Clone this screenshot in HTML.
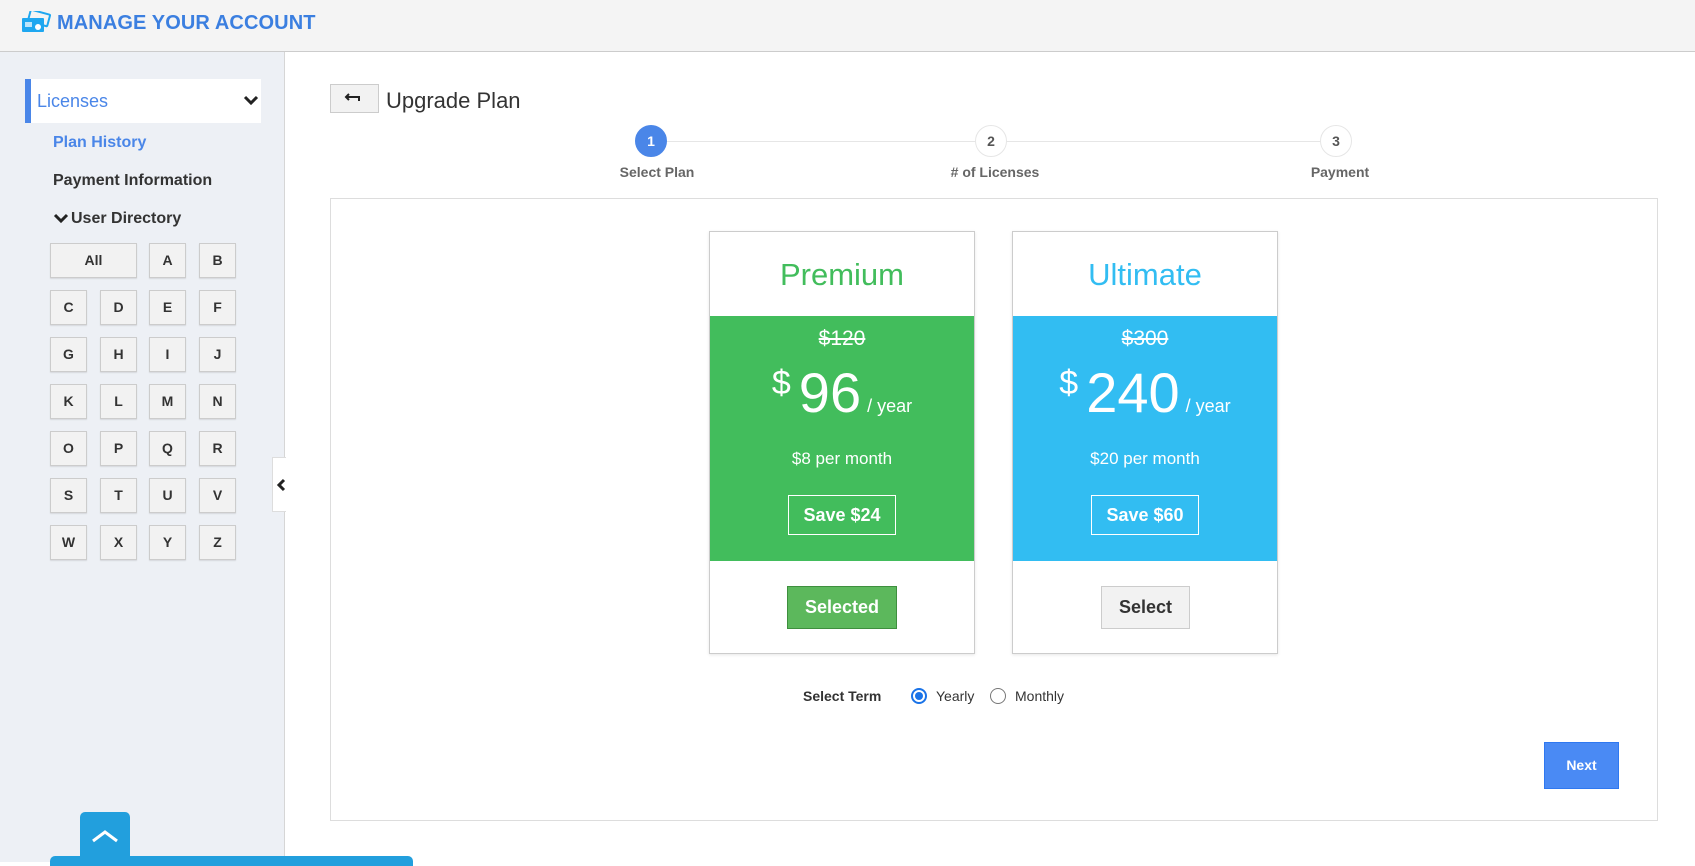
<!DOCTYPE html>
<html><head><meta charset="utf-8"><style>
*{box-sizing:border-box;margin:0;padding:0}
body{width:1695px;height:862px;overflow:hidden;background:#fff;font-family:"Liberation Sans",Arial,sans-serif;position:relative}
.a{position:absolute}
.hdr{left:0;top:0;width:1695px;height:52px;background:#f4f4f4;border-bottom:1px solid #ccc}
.ttl{left:57px;top:12px;font-size:20px;font-weight:bold;color:#3b7fe0;letter-spacing:0.1px}
.side{left:0;top:52px;width:285px;height:810px;background:#edf0f5;border-right:1px solid #d6d6d6}
.lic{left:25px;top:79px;width:236px;height:44px;background:#fff;border-left:6px solid #4a86e8}
.lic span{position:absolute;left:6px;top:12px;font-size:18px;color:#4a86e8}
.nav{font-size:16px;font-weight:bold;color:#333}
.btn{position:absolute;height:35px;width:37px;background:#f2f2f2;border:1px solid #ccc;box-shadow:0 1px 1px rgba(0,0,0,.1);font-size:14px;font-weight:bold;color:#333;text-align:center;line-height:33px}
.circ{position:absolute;width:32px;height:32px;border-radius:50%;border:1px solid #e6e6e6;background:#fff;text-align:center;line-height:30px;font-size:14px;font-weight:bold;color:#555}
.lbl{position:absolute;font-size:14px;font-weight:bold;color:#666;width:200px;text-align:center}
.card{position:absolute;top:231px;width:266px;height:423px;border:1px solid #ccc;box-shadow:0 1px 3px rgba(0,0,0,.1);background:#fff}
.card .t{position:absolute;left:0;top:25px;width:100%;text-align:center;font-size:31px}
.card .c{position:absolute;left:0;top:84px;width:100%;height:245px;color:#fff;text-align:center}
.old{position:absolute;top:11px;width:100%;font-size:21px;text-decoration:line-through}
.big{position:absolute;top:44px;width:100%;font-size:56px;white-space:nowrap}
.big sup{font-size:34px;vertical-align:top;position:relative;top:4px;margin-right:8px}
.big small{font-size:18px;margin-left:6px}
.pm{position:absolute;top:133px;width:100%;font-size:17px}
.save{position:absolute;top:179px;width:108px;height:40px;border:1px solid #fff;font-size:18px;font-weight:bold;line-height:38px}
</style></head><body>
<div class="a hdr"></div>
<svg class="a" style="left:21px;top:11px" width="30" height="22" viewBox="0 0 30 22"><rect x="8" y="1" width="20" height="12" rx="1" transform="rotate(15 18 7)" fill="none" stroke="#1ea7f0" stroke-width="2"/><rect x="1" y="7" width="22" height="14" rx="1" fill="#1ea7f0"/><rect x="4" y="11" width="7" height="5" fill="#fff" opacity=".7"/><circle cx="17" cy="16" r="3" fill="#fff"/></svg>
<div class="a ttl">MANAGE YOUR ACCOUNT</div>
<div class="a side"></div>
<div class="a lic"><span>Licenses</span>
<svg style="position:absolute;left:212px;top:16px" width="16" height="12" viewBox="0 0 16 12"><path d="M2 2l6 6 6-6" fill="none" stroke="#222" stroke-width="3"/></svg></div>
<div class="a nav" style="left:53px;top:134px;color:#4a86e8">Plan History</div>
<div class="a nav" style="left:53px;top:172px">Payment Information</div>
<svg class="a" style="left:53px;top:213px" width="16" height="12" viewBox="0 0 16 12"><path d="M2 2l6 6 6-6" fill="none" stroke="#222" stroke-width="3"/></svg>
<div class="a nav" style="left:71px;top:210px">User Directory</div>
<div class="btn" style="left:50px;top:243px;width:87px">All</div>
<div class="btn" style="left:149px;top:243px">A</div>
<div class="btn" style="left:199px;top:243px">B</div>
<div class="btn" style="left:50px;top:290px">C</div><div class="btn" style="left:100px;top:290px">D</div><div class="btn" style="left:149px;top:290px">E</div><div class="btn" style="left:199px;top:290px">F</div>
<div class="btn" style="left:50px;top:337px">G</div><div class="btn" style="left:100px;top:337px">H</div><div class="btn" style="left:149px;top:337px">I</div><div class="btn" style="left:199px;top:337px">J</div>
<div class="btn" style="left:50px;top:384px">K</div><div class="btn" style="left:100px;top:384px">L</div><div class="btn" style="left:149px;top:384px">M</div><div class="btn" style="left:199px;top:384px">N</div>
<div class="btn" style="left:50px;top:431px">O</div><div class="btn" style="left:100px;top:431px">P</div><div class="btn" style="left:149px;top:431px">Q</div><div class="btn" style="left:199px;top:431px">R</div>
<div class="btn" style="left:50px;top:478px">S</div><div class="btn" style="left:100px;top:478px">T</div><div class="btn" style="left:149px;top:478px">U</div><div class="btn" style="left:199px;top:478px">V</div>
<div class="btn" style="left:50px;top:525px">W</div><div class="btn" style="left:100px;top:525px">X</div><div class="btn" style="left:149px;top:525px">Y</div><div class="btn" style="left:199px;top:525px">Z</div>
<div class="a" style="left:272px;top:457px;width:14px;height:55px;background:#fff;border:1px solid #ddd;border-right:none"></div>
<svg class="a" style="left:276px;top:478px" width="10" height="14" viewBox="0 0 10 14"><path d="M8 2L3 7l5 5" fill="none" stroke="#222" stroke-width="3"/></svg>
<div class="a" style="left:80px;top:812px;width:50px;height:50px;background:#229fdd;border-radius:5px 5px 0 0"></div>
<svg class="a" style="left:90px;top:828px" width="30" height="16" viewBox="0 0 30 16"><path d="M3 13L15 4l12 9" fill="none" stroke="#fff" stroke-width="3"/></svg>
<div class="a" style="left:50px;top:856px;width:363px;height:10px;background:#229fdd;border-radius:5px 5px 0 0"></div>

<div class="a" style="left:330px;top:84px;width:49px;height:29px;background:#f2f2f2;border:1px solid #ccc"></div>
<svg class="a" style="left:344px;top:91px" width="20" height="14" viewBox="0 0 20 14"><path d="M5 3L2 6l3 3M2 6h13v4" fill="none" stroke="#222" stroke-width="2"/></svg>
<div class="a" style="left:386px;top:88px;font-size:22px;color:#333">Upgrade Plan</div>
<div class="a" style="left:651px;top:141px;width:685px;height:1px;background:#e6e6e6"></div>
<div class="circ" style="left:635px;top:125px;background:#4a86e8;border-color:#4a86e8;color:#fff">1</div>
<div class="circ" style="left:975px;top:125px">2</div>
<div class="circ" style="left:1320px;top:125px">3</div>
<div class="lbl" style="left:557px;top:164px">Select Plan</div>
<div class="lbl" style="left:895px;top:164px"># of Licenses</div>
<div class="lbl" style="left:1240px;top:164px">Payment</div>

<div class="a" style="left:330px;top:198px;width:1328px;height:623px;border:1px solid #ddd"></div>
<div class="card" style="left:709px"><div class="t" style="color:#42bd5c">Premium</div>
<div class="c" style="background:#42bd5c"><div class="old">$120</div><div class="big"><sup>$</sup>96<small>/ year</small></div><div class="pm">$8 per month</div><div class="save" style="left:78px">Save $24</div></div>
<div class="a" style="left:77px;top:354px;width:110px;height:43px;background:#5cb85c;border:1px solid #3e8f3e;color:#fff;font-size:18px;font-weight:bold;text-align:center;line-height:41px">Selected</div></div>
<div class="card" style="left:1012px"><div class="t" style="color:#32bdf2">Ultimate</div>
<div class="c" style="background:#32bdf2"><div class="old">$300</div><div class="big"><sup>$</sup>240<small>/ year</small></div><div class="pm">$20 per month</div><div class="save" style="left:78px">Save $60</div></div>
<div class="a" style="left:88px;top:354px;width:89px;height:43px;background:#f2f2f2;border:1px solid #ccc;color:#333;font-size:18px;font-weight:bold;text-align:center;line-height:41px">Select</div></div>

<div class="a" style="left:803px;top:688px;font-size:14px;font-weight:bold;color:#333">Select Term</div>
<div class="a" style="left:911px;top:688px;width:16px;height:16px;border-radius:50%;border:2px solid #1a73e8"><div style="margin:2px;width:8px;height:8px;border-radius:50%;background:#1a73e8"></div></div>
<div class="a" style="left:936px;top:688px;font-size:14px;color:#333">Yearly</div>
<div class="a" style="left:990px;top:688px;width:16px;height:16px;border-radius:50%;border:1px solid #777"></div>
<div class="a" style="left:1015px;top:688px;font-size:14px;color:#333">Monthly</div>
<div class="a" style="left:1544px;top:742px;width:75px;height:47px;background:#4a8af4;border:1px solid #2f78f0;color:#fff;font-size:14px;font-weight:bold;text-align:center;line-height:45px">Next</div>
</body></html>
